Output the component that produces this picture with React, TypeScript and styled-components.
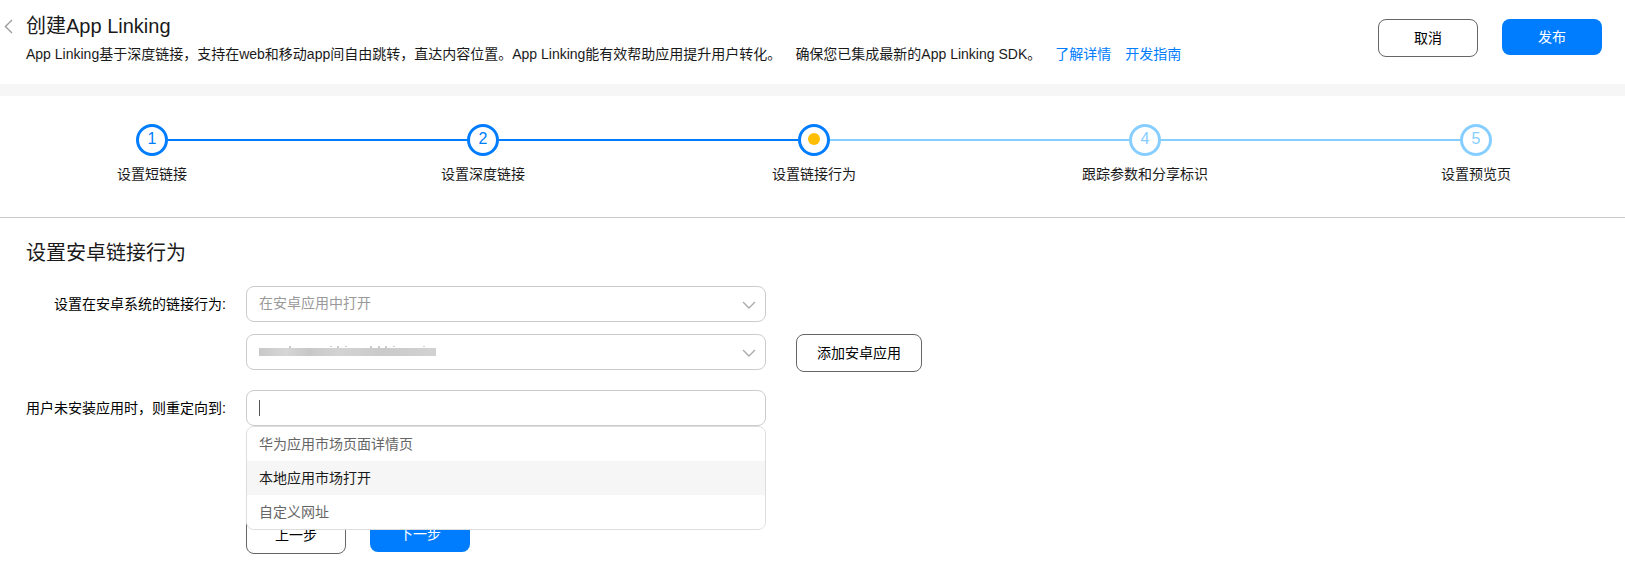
import React, { useState } from "react";
import styled, { createGlobalStyle } from "styled-components";

const BLUE = "#007dff";
const PALE_BLUE = "#86ceff";

const GlobalStyle = createGlobalStyle`
  * { box-sizing: border-box; }
  body {
    margin: 0;
    background: #fff;
    color: #1a1a1a;
    font: 14px/20px "Liberation Sans", Arial, "Noto Sans CJK SC", sans-serif;
  }
  button, input, select { font: inherit; }
`;

const Header = styled.header`
  display: flex;
  align-items: flex-start;
  padding: 12px 23px 20px 0;
  border-bottom: 12px solid #f6f6f6;
`;

const BackButton = styled.button`
  display: flex;
  flex: none;
  width: 26px;
  height: 28px;
  padding: 0 0 0 4px;
  align-items: center;
  border: 0;
  background: none;
  cursor: pointer;
`;

const Heading = styled.div`
  flex: 1;
`;

const Title = styled.h1`
  margin: 0;
  font-size: 20px;
  line-height: 28px;
  font-weight: 400;
`;

const Description = styled.p`
  display: flex;
  flex-wrap: wrap;
  gap: 0 14px;
  margin: 4px 0 0;
`;

const Link = styled.a`
  color: ${BLUE};
  text-decoration: none;
`;

const Actions = styled.div`
  display: flex;
  align-items: flex-start;
  gap: 24px;
`;

const HeaderActions = styled(Actions)`
  padding-top: 7px;
`;

const FormActions = styled(Actions)`
  padding-left: 220px;
`;

const Button = styled.button<{ $primary?: boolean; $wide?: boolean }>`
  flex: none;
  width: ${(p) => (p.$wide ? 126 : 100)}px;
  height: ${(p) => (p.$primary ? 36 : 38)}px;
  padding: 0;
  border: ${(p) => (p.$primary ? "0" : "1px solid #666")};
  border-radius: 8px;
  background: ${(p) => (p.$primary ? BLUE : "#fff")};
  color: ${(p) => (p.$primary ? "#fff" : "#000")};
  cursor: pointer;
`;

const Steps = styled.ol`
  display: flex;
  margin: 0;
  padding: 28px 133px 33px 136px;
  border-bottom: 1px solid #ccc;
  list-style: none;
`;

const Step = styled.li<{ $last?: boolean }>`
  display: flex;
  flex: ${(p) => (p.$last ? "none" : "1")};
`;

const StepBody = styled.div`
  display: flex;
  flex-direction: column;
  align-items: center;
  gap: 8px;
  width: 32px;
  white-space: nowrap;
`;

const Circle = styled.span<{ $reached: boolean }>`
  display: flex;
  align-items: center;
  justify-content: center;
  width: 32px;
  height: 32px;
  padding-bottom: 2px;
  border: 3px solid ${(p) => (p.$reached ? BLUE : PALE_BLUE)};
  border-radius: 50%;
  color: ${(p) => (p.$reached ? BLUE : PALE_BLUE)};
  font-size: 16px;
`;

const Dot = styled.span`
  width: 12px;
  height: 12px;
  border-radius: 50%;
  background: #ffbf00;
`;

const Connector = styled.span<{ $reached: boolean }>`
  flex: 1;
  height: 2px;
  margin-top: 15px;
  background: ${(p) => (p.$reached ? BLUE : PALE_BLUE)};
`;

const Form = styled.form`
  padding: 21px 26px;
`;

const SectionTitle = styled.h2`
  margin: 0 0 19px;
  font-size: 20px;
  line-height: 28px;
  font-weight: 400;
`;

const Row = styled.div<{ $gap: number }>`
  display: grid;
  grid-template-columns: 200px minmax(0, 520px) auto;
  column-gap: 20px;
  align-items: start;
  height: 36px;
  margin-bottom: ${(p) => p.$gap}px;
`;

const Label = styled.label`
  color: #000;
  line-height: 36px;
  text-align: right;
  white-space: nowrap;
`;

const Field = styled.div`
  position: relative;
  grid-column: 2;
`;

const Extra = styled.div`
  padding-left: 10px;
`;

const Select = styled.select`
  display: block;
  width: 100%;
  height: 36px;
  padding: 0 40px 2px 12px;
  border: 1px solid #ccc;
  border-radius: 8px;
  background: #fff;
  color: #999;
  appearance: none;
  outline: none;
`;

const Input = styled.input`
  display: block;
  width: 100%;
  height: 36px;
  padding: 0 12px;
  border: 1px solid #ccc;
  border-radius: 8px;
  background: #fff;
  outline: none;
  caret-color: transparent;
`;

const Arrow = styled.svg`
  position: absolute;
  top: 14px;
  right: 10px;
  pointer-events: none;
`;

const Redaction = styled.svg`
  position: absolute;
  top: 12px;
  left: 12px;
  pointer-events: none;
`;

const Caret = styled.span`
  position: absolute;
  top: 10px;
  left: 13px;
  width: 1px;
  height: 16px;
  background: #555;
`;

const Menu = styled.ul`
  position: absolute;
  z-index: 1;
  top: 100%;
  left: 0;
  right: 0;
  margin: 0;
  padding: 0;
  border: 1px solid #ddd;
  border-radius: 8px;
  background: #fff;
  list-style: none;
  overflow: hidden;
`;

const MenuItem = styled.li<{ $active: boolean }>`
  padding: 0 12px;
  line-height: 34px;
  color: ${(p) => (p.$active ? "#1a1a1a" : "#666")};
  background: ${(p) => (p.$active ? "#f6f6f6" : "#fff")};
  cursor: pointer;
`;

const stepNames = ["设置短链接", "设置深度链接", "设置链接行为", "跟踪参数和分享标识", "设置预览页"];
const targets = ["华为应用市场页面详情页", "本地应用市场打开", "自定义网址"];
const current = 2;

function DownArrow() {
  return (
    <Arrow width="14" height="10" viewBox="0 0 14 10" fill="none" stroke="#aaa" strokeWidth="1.4" aria-hidden="true">
      <path d="M1 2 L7 8 L13 2" />
    </Arrow>
  );
}

export default function App() {
  const [active, setActive] = useState(1);
  return (
    <>
      <GlobalStyle />
      <Header>
        <BackButton type="button" aria-label="返回">
          <svg width="9" height="15" viewBox="0 0 9 15" fill="none" stroke="#999" strokeWidth="1.3">
            <path d="M8 1 L1.4 7.5 L8 14" />
          </svg>
        </BackButton>
        <Heading>
          <Title>创建App Linking</Title>
          <Description>
            <span>
              App Linking基于深度链接，支持在web和移动app间自由跳转，直达内容位置。App Linking能有效帮助应用提升用户转化。
            </span>
            <span>确保您已集成最新的App Linking SDK。</span>
            <Link href="#details">了解详情</Link>
            <Link href="#guide">开发指南</Link>
          </Description>
        </Heading>
        <HeaderActions>
          <Button type="button">取消</Button>
          <Button type="button" $primary>发布</Button>
        </HeaderActions>
      </Header>

      <Steps>
        {stepNames.map((name, i) => (
          <Step key={name} $last={i === stepNames.length - 1} aria-current={i === current ? "step" : undefined}>
            <StepBody>
              <Circle $reached={i <= current}>{i === current ? <Dot /> : i + 1}</Circle>
              <span>{name}</span>
            </StepBody>
            {i < stepNames.length - 1 && <Connector $reached={i < current} />}
          </Step>
        ))}
      </Steps>

      <Form onSubmit={(e) => e.preventDefault()}>
        <SectionTitle>设置安卓链接行为</SectionTitle>

        <Row $gap={12}>
          <Label htmlFor="behavior">设置在安卓系统的链接行为:</Label>
          <Field>
            <Select id="behavior">
              <option>在安卓应用中打开</option>
            </Select>
            <DownArrow />
          </Field>
        </Row>

        <Row $gap={20}>
          <Field>
            <Select aria-label="安卓应用">
              <option></option>
            </Select>
            <Redaction width="180" height="12" viewBox="0 0 180 12" aria-hidden="true">
              <defs>
                <linearGradient id="smudge">
                  <stop offset="0" stopColor="#c9c9c9" />
                  <stop offset="0.15" stopColor="#d6d6d6" />
                  <stop offset="0.28" stopColor="#c8c8c8" />
                  <stop offset="0.45" stopColor="#d3d3d3" />
                  <stop offset="0.7" stopColor="#cacaca" />
                  <stop offset="1" stopColor="#d2d2d2" />
                </linearGradient>
              </defs>
              <path
                d="M32 0v3M73 0v1M80 0v3M88 0v1M113 0v3M121 0v3M128 0v3M136 0v1M166 0v1"
                stroke="#999"
                strokeWidth="1"
              />
              <rect x="1" y="2" width="177" height="8" fill="url(#smudge)" />
            </Redaction>
            <DownArrow />
          </Field>
          <Extra>
            <Button type="button" $wide>添加安卓应用</Button>
          </Extra>
        </Row>

        <Row $gap={90}>
          <Label htmlFor="redirect">用户未安装应用时，则重定向到:</Label>
          <Field>
            <Input id="redirect" role="combobox" aria-expanded="true" aria-controls="redirect-list" autoComplete="off" />
            <Caret />
            <Menu id="redirect-list" role="listbox">
              {targets.map((t, i) => (
                <MenuItem
                  key={t}
                  role="option"
                  aria-selected={i === active}
                  $active={i === active}
                  onMouseEnter={() => setActive(i)}
                >
                  {t}
                </MenuItem>
              ))}
            </Menu>
          </Field>
        </Row>

        <FormActions>
          <Button type="button">上一步</Button>
          <Button type="submit" $primary>下一步</Button>
        </FormActions>
      </Form>
    </>
  );
}
